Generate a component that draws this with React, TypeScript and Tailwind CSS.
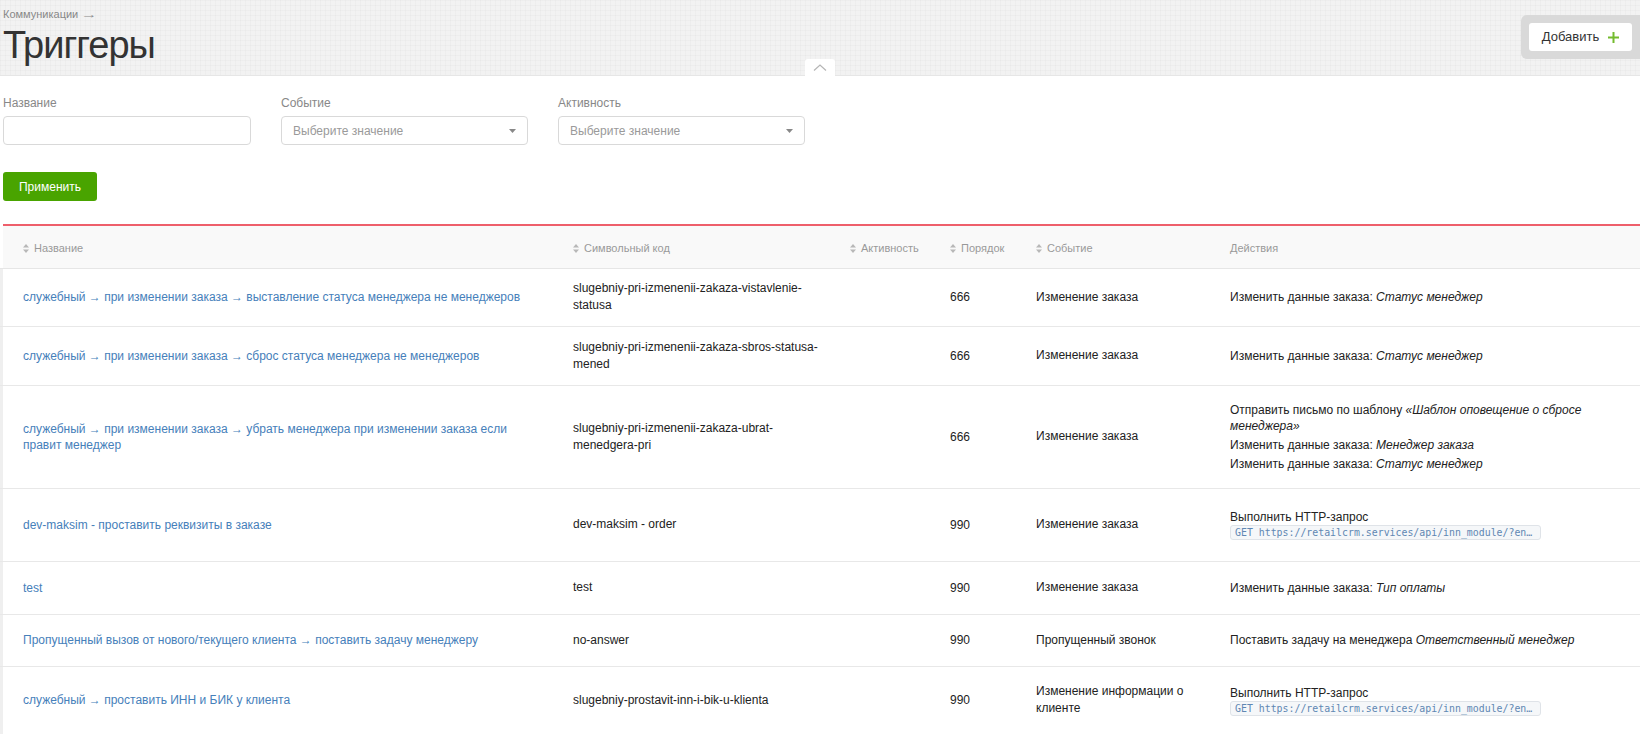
import type { ReactNode } from 'react'

type Trigger = {
  name: string
  code: string
  order: number
  event: string
  actions: ReactNode
  rowClass: string
}

const httpUrl = 'GET https://retailcrm.services/api/inn_module/?entity=order&id={{ order.id }}'

function HttpAction() {
  return (
    <>
      <div className="leading-[16px]">Выполнить HTTP-запрос</div>
      <code className="block w-fit max-w-[311px] truncate rounded-[3px] border border-[#dfe3e8] bg-[#f5f7f9] px-[4px] font-['DejaVu_Sans_Mono',monospace] text-[9.9px] leading-[13px] text-[#5f87b3]">
        {httpUrl}
      </code>
    </>
  )
}

function ChangeOrder({ field }: { field: string }) {
  return (
    <div className="leading-[16px]">
      Изменить данные заказа: <i>{field}</i>
    </div>
  )
}

const triggers: Trigger[] = [
  {
    name: 'служебный → при изменении заказа → выставление статуса менеджера не менеджеров',
    code: 'slugebniy-pri-izmenenii-zakaza-vistavlenie-statusa',
    order: 666,
    event: 'Изменение заказа',
    actions: <ChangeOrder field="Статус менеджер" />,
    rowClass: 'h-[58px]',
  },
  {
    name: 'служебный → при изменении заказа → сброс статуса менеджера не менеджеров',
    code: 'slugebniy-pri-izmenenii-zakaza-sbros-statusa-mened',
    order: 666,
    event: 'Изменение заказа',
    actions: <ChangeOrder field="Статус менеджер" />,
    rowClass: 'h-[59px]',
  },
  {
    name: 'служебный → при изменении заказа → убрать менеджера при изменении заказа если правит менеджер',
    code: 'slugebniy-pri-izmenenii-zakaza-ubrat-menedgera-pri',
    order: 666,
    event: 'Изменение заказа',
    actions: (
      <div className="flex flex-col gap-[3px]">
        <div className="leading-[16px]">
          Отправить письмо по шаблону <i>«Шаблон оповещение о сбросе менеджера»</i>
        </div>
        <ChangeOrder field="Менеджер заказа" />
        <ChangeOrder field="Статус менеджер" />
      </div>
    ),
    rowClass: 'h-[103px]',
  },
  {
    name: 'dev-maksim - проставить реквизиты в заказе',
    code: 'dev-maksim - order',
    order: 990,
    event: 'Изменение заказа',
    actions: <HttpAction />,
    rowClass: 'h-[73px]',
  },
  {
    name: 'test',
    code: 'test',
    order: 990,
    event: 'Изменение заказа',
    actions: <ChangeOrder field="Тип оплаты" />,
    rowClass: 'h-[53px]',
  },
  {
    name: 'Пропущенный вызов от нового/текущего клиента → поставить задачу менеджеру',
    code: 'no-answer',
    order: 990,
    event: 'Пропущенный звонок',
    actions: (
      <div className="leading-[16px]">
        Поставить задачу на менеджера <i>Ответственный менеджер</i>
      </div>
    ),
    rowClass: 'h-[52px]',
  },
  {
    name: 'служебный → проставить ИНН и БИК у клиента',
    code: 'slugebniy-prostavit-inn-i-bik-u-klienta',
    order: 990,
    event: 'Изменение информации о клиенте',
    actions: <HttpAction />,
    rowClass: 'h-[68px]',
  },
]

function SortIcon() {
  return (
    <svg width="6" height="9" viewBox="0 0 6 9" className="mr-[5px] inline-block fill-[#b8b8b8] align-[-1px]">
      <path d="M3 0L6 3.6H0z M3 9L0 5.4H6z" />
    </svg>
  )
}

function SelectBox() {
  return (
    <div className="flex h-[29px] w-[247px] items-center justify-between rounded-[4px] border border-[#d9d9d9] bg-white pl-[11px] pr-[11px] text-[12px] text-[#9a9a9a]">
      <span>Выберите значение</span>
      <svg width="7" height="4" viewBox="0 0 7 4" className="fill-[#888]">
        <path d="M0 0H7L3.5 4z" />
      </svg>
    </div>
  )
}

export default function App() {
  return (
    <div className="min-h-screen bg-white font-['Liberation_Sans',Arial,sans-serif] text-[#222]">
      {/* Page header */}
      <div className="relative flex h-[76px] items-start justify-between bg-[#f2f2f2] bg-[repeating-linear-gradient(90deg,rgba(0,0,0,0.02)_0px,rgba(0,0,0,0.02)_1px,transparent_1px,transparent_5px),repeating-linear-gradient(0deg,rgba(0,0,0,0.02)_0px,rgba(0,0,0,0.02)_1px,transparent_1px,transparent_5px)] shadow-[inset_0_-1px_0_#e6e6e6]">
        <div className="pl-[3px] pt-[7px]">
          <div className="text-[11px] leading-[14px] text-[#888]">
            Коммуникации <span className="inline-block scale-x-150 origin-left">→</span>
          </div>
          <h1 className="mt-[3px] text-[38px] leading-[42px] tracking-[-1px] text-[#333]">Триггеры</h1>
        </div>
        <div className="mt-[15px] rounded-l-[6px] bg-[#d9d9d9] py-[8px] pl-[8px] pr-[8px]">
          <button className="flex h-[28px] w-[103px] items-center justify-center gap-[9px] rounded-[3px] bg-white text-[13px] text-[#333]">
            Добавить
            <svg width="11" height="11" viewBox="0 0 11 11" className="fill-[#74bb2e]">
              <path d="M4.5 0H6.5V4.5H11V6.5H6.5V11H4.5V6.5H0V4.5H4.5z" />
            </svg>
          </button>
        </div>
        <div className="absolute bottom-0 left-1/2 flex h-[17px] w-[30px] -translate-x-1/2 items-center justify-center rounded-t-[3px] bg-white">
          <svg width="14" height="7" viewBox="0 0 14 7" className="fill-none stroke-[#b5b5b5]">
            <path d="M1 6.5L7 1L13 6.5" strokeWidth="1.2" />
          </svg>
        </div>
      </div>

      {/* Filters */}
      <div className="pl-[3px] pt-[20px]">
        <div className="flex gap-[30px]">
          <div>
            <div className="mb-[5px] text-[12px] leading-[15px] text-[#888]">Название</div>
            <input className="h-[29px] w-[248px] rounded-[4px] border border-[#d9d9d9] bg-white px-[10px] text-[12px] outline-none" />
          </div>
          <div>
            <div className="mb-[5px] text-[12px] leading-[15px] text-[#888]">Событие</div>
            <SelectBox />
          </div>
          <div>
            <div className="mb-[5px] text-[12px] leading-[15px] text-[#888]">Активность</div>
            <SelectBox />
          </div>
        </div>
        <button className="mt-[27px] h-[29px] w-[94px] rounded-[3px] bg-[#49a400] text-[12px] text-white">
          Применить
        </button>
      </div>

      {/* Triggers list */}
      <div className="mt-[23px] ml-[3px] h-[2px] bg-[#ee5f6b]" />
      <table className="w-full table-fixed border-collapse text-[12px]">
        <colgroup>
          <col className="w-[553px]" />
          <col className="w-[277px]" />
          <col className="w-[100px]" />
          <col className="w-[86px]" />
          <col className="w-[194px]" />
          <col />
        </colgroup>
        <thead>
          <tr className="h-[42px] border-b border-[#e6e6e6] bg-[#f9f9f9] text-left text-[11px] text-[#999]">
            <th className="pl-[23px] pt-[3px] font-normal shadow-[inset_3px_0_0_#fff]"><SortIcon />Название</th>
            <th className="pl-[20px] pt-[3px] font-normal"><SortIcon />Символьный код</th>
            <th className="pl-[20px] pt-[3px] font-normal"><SortIcon />Активность</th>
            <th className="pl-[20px] pt-[3px] font-normal"><SortIcon />Порядок</th>
            <th className="pl-[20px] pt-[3px] font-normal"><SortIcon />Событие</th>
            <th className="pl-[20px] pt-[3px] font-normal">Действия</th>
          </tr>
        </thead>
        <tbody>
          {triggers.map(t => (
            <tr key={t.code} className={`${t.rowClass} border-b border-[#e8e8e8] align-middle`}>
              <td className="pl-[23px] pr-[8px] leading-[16px] shadow-[inset_3px_0_0_#efefef]">
                <a href="#" className="text-[#4680ba]">{t.name}</a>
              </td>
              <td className="pl-[20px] leading-[17px]">{t.code}</td>
              <td className="pl-[20px]" />
              <td className="pl-[20px]">{t.order}</td>
              <td className="pl-[20px] pr-[12px] leading-[17px]">{t.event}</td>
              <td className="pl-[20px] pr-[20px]">{t.actions}</td>
            </tr>
          ))}
        </tbody>
      </table>
    </div>
  )
}
